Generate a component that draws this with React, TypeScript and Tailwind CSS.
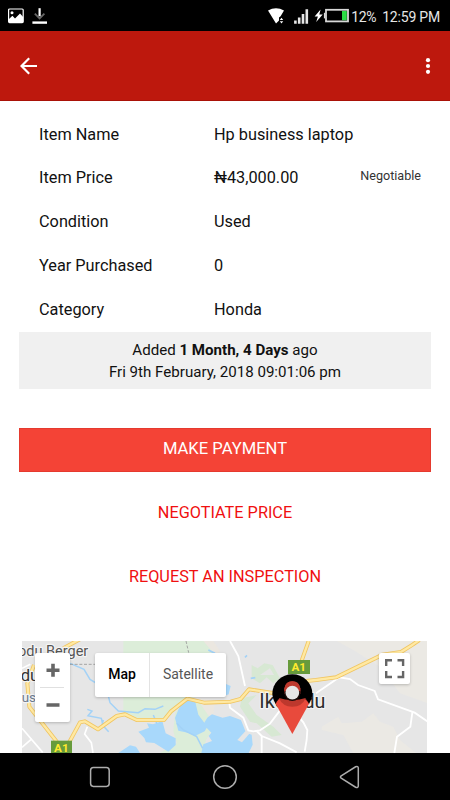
import type { ReactNode } from "react";

type DetailRow = {
  label: string;
  value: string;
  note?: string;
};

const rows: DetailRow[] = [
  { label: "Item Name", value: "Hp business laptop" },
  { label: "Item Price", value: "₦43,000.00", note: "Negotiable" },
  { label: "Condition", value: "Used" },
  { label: "Year Purchased", value: "0" },
  { label: "Category", value: "Honda" },
];

function StatusBar() {
  return (
    <div className="h-[31px] shrink-0 bg-black flex items-center justify-between pl-2 pr-[10px] text-[#e6e6e6]">
      <div className="flex items-center gap-[8px]">
        <svg width="16" height="16" viewBox="0 0 16 16">
          <rect x="0.6" y="1" width="14.6" height="13.6" rx="1" fill="none" stroke="#fff" strokeWidth="1.2" />
          <circle cx="4" cy="4.7" r="1.5" fill="#fff" />
          <path d="M1 11l3.4-3.2L7 10.6l5-5 3.2 3.4v5.6H1z" fill="#fff" />
        </svg>
        <svg width="16" height="18" viewBox="0 0 16 18">
          <path d="M2.8 6.6l4.8 4.8 4.8-4.8" fill="none" stroke="#666" strokeWidth="1.8" />
          <path d="M7.6 1.2v8" stroke="#fff" strokeWidth="2.2" />
          <path d="M0.4 15.6h14.6" stroke="#fff" strokeWidth="2.4" />
        </svg>
      </div>

      <div className="flex items-center">
        <svg width="82" height="20" viewBox="268 6 82 20" className="shrink-0">
          {/* wifi */}
          <path d="M269 10.6q8-4.8 16 0l-3.4 5.6-1.6 1.2v3l-3 3z" fill="#fff" />
          <path d="M280.8 20l1.7-2.2 1.7 2.2zM280.8 21.2l1.7 2.2 1.7-2.2z" fill="#fff" />
          {/* signal */}
          <path d="M296.4 20.4v3.4M300.2 17.6v6.2M304 14v9.8M307.8 9.2v14.6" stroke="#e6e6e6" strokeWidth="2.6" />
          {/* charging bolt and battery */}
          <path d="M321.6 9.4l-6 7h3.3l-1.7 5.6 6.5-7.4h-3.4z" fill="#fff" />
          <rect x="327" y="9.8" width="22" height="11.6" fill="none" stroke="#d8d8d8" strokeWidth="1.8" />
          <path d="M325.6 12.8v5.6" stroke="#d8d8d8" strokeWidth="1.4" />
          <rect x="343" y="11" width="4.8" height="9.2" fill="#2bdc45" />
        </svg>
        <span className="ml-[2px] w-[31px] text-[14px] leading-4 pt-[2px] tracking-[-0.4px]">12%</span>
        <span className="text-[14px] leading-4 pt-[2px] tracking-[-0.2px]">12:59 PM</span>
      </div>
    </div>
  );
}

function AppBar() {
  return (
    <header className="h-[70px] shrink-0 bg-[#bd180d] border-b border-[#a91208] flex items-center justify-between pl-5 pr-[19px] text-white">
      <svg width="18" height="18" viewBox="0 0 18 18" fill="none" stroke="currentColor" strokeWidth="2.2">
        <path d="M17 9H1.6M9.2 1.2L1.5 9l7.7 7.8" />
      </svg>
      <svg width="6" height="18" viewBox="0 0 6 18" fill="currentColor">
        <circle cx="3" cy="3.2" r="2.1" />
        <circle cx="3" cy="9" r="2.1" />
        <circle cx="3" cy="14.8" r="2.1" />
      </svg>
    </header>
  );
}

function MapControl({ className, children }: { className: string; children: ReactNode }) {
  return (
    <div className={"absolute bg-white rounded-[2px] shadow-[0_1px_3px_rgba(0,0,0,0.22)] " + className}>
      {children}
    </div>
  );
}

function MapView() {
  return (
    <div className="relative ml-[22px] w-[405px] h-[112px] overflow-hidden bg-[#e6e6e6]">
      <svg width="405" height="112" viewBox="66 33 1215 336" className="block">
        <rect x="66" y="33" width="1215" height="336" fill="#e6e6e6" />
        {/* lighter land */}
        <path d="M1010 33L1060 60 1140 110 1200 190 1283 220V33z" fill="#ebe9e4" />
        <path d="M965 290l50-30 10 20 60-5 35-25 20 25 40 15 20 40 50 40H1060l-30-55-65-15z" fill="#ebe9e4" />
        <path d="M590 33h50l20 30-20 30h-40zM590 205l55 5-5 50-25-10z" fill="#ebe7e0" />
        {/* parks */}
        <path d="M370 33h240l30 35v120l-80 20-50 50-20 10h-80l-40-20z" fill="#dcedd9" />
        <path d="M525 250l20-25 30-20 25 15 38 55-5 30-15 25-10 39H480l50-30-10-35z" fill="#dcedd9" />
        <path d="M755 105l18 10 20-15 25 5 22 40-20 15-20-18-20 18-25-15zM725 205l45-10-25 25 25 35 50 35 25 25-30 5-45-40-20-5-30-45z" fill="#d7e8d3" />
        <path d="M780 135l30-20 12 20z" fill="#e6e6e6" />
        {/* water */}
        <path d="M415 305l32-12-6-13 18 3 28-10 10 37 30 15v20l-22 20-42-26-25-2-5-13z" fill="#a8d8fb" />
        <path d="M550 210l35 2 10 42 27 36-8 14-29 14-22-10-28-6-10-38 10-25z" fill="#a8d8fb" />
        <path d="M355 369l35-23 18 4 12 19zM604 369l6-26 26-10-10-15 8-10-24-25 12-20 14-10 32 10 22-5 33 12 15 38 17 6 3 30-12 25z" fill="#a8d8fb" />
        <path d="M678 162l14 6-6 25-8 3z" fill="#a8d8fb" />
        <path d="M712 330l24-26 14 5-24 28z" fill="#e6e6e6" />
        <path d="M210 100l42 18 18 30 50 30 10 40 25 25 60 5 20-12 30 2 25-10M262 238l14 5-12 14 40 8 5 22 17 18M310 270l-5 20M470 280l-10-25M530 280l20 20 40 20 18 35" fill="none" stroke="#a3d2f7" strokeWidth="4.5" />
        <path d="M625 60l20 10M735 82l6-6M752 145l14-2" stroke="#a3d2f7" strokeWidth="5" fill="none" />
        {/* minor roads */}
        <path d="M66 295l62 72M66 352l30-26M262 290l-8 22 20 26 5 31M66 115l25-12" fill="none" stroke="#fff" strokeWidth="5" />
        <path d="M690 33l25 45 20 90M688 218l2 15 40 30 15 38 15 3 20-3 30-20 30-40M770 303l15 15v51M785 318l55 22 50 27M900 265l10 12 12 23-2 30-6 35M948 190l70-48 32 5 24 18 50 18 10 25 110 40 48 33M1237 248l-6 42-40 30-8 49" fill="none" stroke="#fff" strokeWidth="5.5" />
        <path d="M210 103h80M558 33l8 35" stroke="#999" strokeWidth="2.5" strokeDasharray="9 5" fill="none" />
        {/* highways */}
        <g fill="none" strokeLinejoin="round">
          <path d="M102 105l-20 55 6 70 90 115M190 55l55-30" stroke="#f0c562" strokeWidth="12" />
          <path d="M190 369l50-92 14-3 40 24 56-40 25-5 35 17h82l20-25 50-39 50 12 80-3 30-8 25-29 85 13M926 33l-22 62M890 156l58-6 60-8 140-68 55-8 35-22 20-14" stroke="#f0c562" strokeWidth="12" />
          <path d="M102 105l-20 55 6 70 90 115M190 55l55-30" stroke="#ffe9a3" strokeWidth="7" />
          <path d="M190 369l50-92 14-3 40 24 56-40 25-5 35 17h82l20-25 50-39 50 12 80-3 30-8 25-29 85 13M926 33l-22 62M890 156l58-6 60-8 140-68 55-8 35-22 20-14" stroke="#ffe9a3" strokeWidth="7" />
        </g>
        {/* place names */}
        <g fontFamily="Roboto, sans-serif" stroke="#f4f4f4" strokeWidth="7" paintOrder="stroke" strokeLinejoin="round">
          <text x="54" y="77" fontSize="43.5" fill="#555">odu Berger</text>
          <text x="62" y="154" fontSize="50" fill="#333">du</text>
          <text x="65" y="216" fontSize="40" fill="#6c7a8e">us</text>
          <text x="778" y="235" fontSize="59" fill="#2c2c2c">Ikorodu</text>
        </g>
        {/* route shields */}
        <rect x="153" y="332" width="63" height="40" fill="#679b3c" />
        <rect x="864" y="90" width="66" height="42" fill="#679b3c" />
        <g fontFamily="Roboto, sans-serif" fontSize="35" fontWeight="700" fill="#ffea2e" textAnchor="middle">
          <text x="184" y="365">A1</text>
          <text x="896" y="123">A1</text>
        </g>
        {/* marker */}
        <path d="M827 222q-10-18-10-31a60 58 0 0 1 120 0q0 13-10 31z" fill="#000" />
        <path d="M827 221q6-16 22-18h56q14 2 22 18l-50 91z" fill="#e84a3c" />
        <path d="M836 203h82q-12 27-41 27t-41-27z" fill="#bd382d" />
        <path d="M834 203q43 14 86 0l-3-10h-80z" fill="#000" />
        <path d="M853 192v-16q4-22 24-22t24 22v16z" fill="#bd382d" />
        <circle cx="877" cy="189" r="24" fill="#1c0c0a" />
        <path d="M853 184v-9q4-21 24-21t24 21v9z" fill="#bd382d" />
        <circle cx="877" cy="188" r="20.5" fill="#e6e6e6" />
      </svg>

      <MapControl className="left-[13px] top-[12px] w-[35px] h-[69px]">
        <svg width="35" height="69" viewBox="0 0 35 69" stroke="#666">
          <path d="M11.5 17.2h13M18 10.7v13M11.5 52h13" strokeWidth="3.6" />
          <path d="M5 34.5h24" stroke="#e0e0e0" strokeWidth="1" />
        </svg>
      </MapControl>

      <MapControl className="left-[73px] top-[12px] h-[44px] w-[131px] flex items-center text-[14px]">
        <div className="w-[55px] h-full border-r border-[#e3e3e3] flex items-center justify-center font-medium text-black">
          Map
        </div>
        <div className="flex-1 text-center text-[#565656]">Satellite</div>
      </MapControl>

      <MapControl className="left-[357px] top-[12px] w-[31px] h-[31px]">
        <svg width="31" height="31" viewBox="0 0 31 31" fill="none" stroke="#666" strokeWidth="2.4">
          <path d="M7.2 13V7.2H13M18.5 7.2h5.6V13M24.1 18v6h-5.6M13 24H7.2v-6" />
        </svg>
      </MapControl>
    </div>
  );
}

function NavBar() {
  return (
    <nav className="h-[47px] shrink-0 bg-black">
      <svg width="450" height="47" viewBox="0 0 450 47" fill="none" stroke="#adadad" strokeWidth="1.5">
        <rect x="90.6" y="14.6" width="18.6" height="18.8" rx="2.8" />
        <circle cx="225" cy="24" r="11.3" />
        <path d="M341.2 22.8l14.4-9q2.6-.9 2.7 1.2v18q-.1 2.1-2.7 1.2l-14.4-9q-1.5-1.2 0-2.4z" />
      </svg>
    </nav>
  );
}

export default function App() {
  return (
    <div className="w-[450px] h-[800px] overflow-hidden bg-white flex flex-col font-[Roboto,'Noto_Sans',sans-serif] text-[#111]">
      <StatusBar />
      <AppBar />

      <main className="h-[652px] shrink-0 overflow-hidden">
        <dl className="mx-[19px] pt-[12px] text-[16.3px]">
          {rows.map((row) => (
            <div key={row.label} className="h-[43.8px] pl-5 pr-[10px] flex items-center">
              <dt className="w-[175px]">{row.label}</dt>
              <dd className="flex-1">{row.value}</dd>
              {row.note ? (
                <dd className="text-[12.6px] text-[#333] -mt-[5px]">{row.note}</dd>
              ) : null}
            </div>
          ))}
        </dl>

        <div className="mx-[19px] h-[57px] bg-[#f0f0f0] text-center text-[15.1px] leading-[22.5px] pt-[7px]">
          <p>
            Added <b className="font-bold">1 Month, 4 Days</b> ago
          </p>
          <p>Fri 9th February, 2018 09:01:06 pm</p>
        </div>

        <div className="mx-[19px] mt-[39px] flex flex-col text-[16.3px]">
          <button className="h-[44px] bg-[#f44336] border border-[#e53a2e] text-white pb-[1px] text-[16.6px]">
            MAKE PAYMENT
          </button>
          <button className="h-[44px] mt-[19px] text-[#f01010]">NEGOTIATE PRICE</button>
          <button className="h-[44px] mt-5 text-[#f01010]">REQUEST AN INSPECTION</button>
        </div>

        <div className="mt-[42px]">
          <MapView />
        </div>
      </main>

      <NavBar />
    </div>
  );
}
